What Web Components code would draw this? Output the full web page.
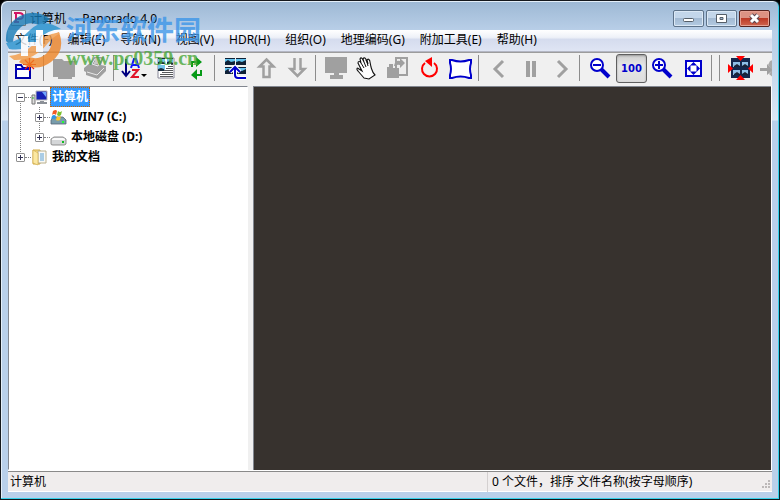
<!DOCTYPE html>
<html lang="zh-CN">
<head>
<meta charset="utf-8">
<title>计算机 - Panorado 4.0</title>
<style>
html,body{margin:0;height:100%;background:#000}
body{font:12px/16px "Noto Sans","Noto Sans CJK SC",sans-serif;color:#000;overflow:hidden}
</style>
</head>
<body>
<app-window></app-window>
<script>
function define(name, html, init) {
  customElements.define(name, class extends HTMLElement {
    constructor() {
      super();
      const root = this.attachShadow({mode: 'open'});
      root.innerHTML = html;
    }
    connectedCallback() { if (init) init.call(this, this.shadowRoot); }
  });
}

const ICONS = {
  newfolder: '<path d="M6 11h5l2 3h7v10H6z" fill="#fff" stroke="#00a" stroke-width="2"/><path d="M5 14h15v2H5z" fill="#00c"/><path d="M19.500 4v13M13 10.500h13M15 6l9 9M24 6l-9 9" stroke="#f21a08" stroke-width="1.200"/>',
  folder: '<path d="M4 5h9l2 2h11v16h-3v2H9v-2H4z" fill="#a0a0a0"/>',
  print: '<path d="M4 14l6-5 4-6h10l-3 8 5 1v5l-8 8-12-4v-3l-2-1z" fill="#a0a0a0"/><path d="M15 5h6l-3 7-6-2zM7 18l10 3 7-7" stroke="#e8e8e8" fill="none"/><path d="M15 7h4M14 9h4" stroke="#eee"/>',
  sort: '<path d="M7 5v17M3 17l4 5 4-5" stroke="#000080" stroke-width="2" fill="none"/><path d="M12 14l3-9h2l3 9M13 11h6" stroke="#11f" stroke-width="2" fill="none"/><path d="M13 16h6l-6 7h7" stroke="#e0142a" stroke-width="2" fill="none"/><path d="M22 20h6l-3 3z"/>',
  details: '<path d="M8 4h16v20H8z" fill="#fff" stroke="#889" /><path d="M8 4h7v6H8zM17 4h6v6h-6zM8 11h7v6H8z" fill="#75c6eb"/><path d="M8 4h7v1H8zM17 4h6v1h-6zM8 8l3-1 4 2v1H8zM17 8l3-1 3 2v1h-6zM8 15l3-1 3 1v2H8z" fill="#182b3b"/><path d="M21 11h2M18 13h5M16 15h7M14 17h9M12 19h11M10 21h13M10 23h13" stroke="#56585c" transform="translate(0 -.5)"/>',
  refresh: '<path d="M11 13V8h6M20 16v5h-7" stroke="#079a17" stroke-width="2" fill="none"/><path d="M15 3l6 5-6 5zM16 15l-6 6 6 5z" fill="#079a17"/>',
  browser: '<path d="M5 4h10v7H5zM16 4h10v7H16zM5 13h10v7H5zM16 13h10v7H16z" fill="#62c3ef"/><path d="M5 4h10v1H5zM16 4h10v1H16zM5 13h10v1H5zM16 13h10v1H16zM5 8l3-2 3 2 4-1v4H5zM16 8l3-1 3 1 4-2v5H16zM5 17l3-2 3 2 4-1v4H5zM16 17l3-1 3 1 4-2v5H16z" fill="#102136"/><path d="M26 24h-8q-3 0-3-3v-7M10 18l5-5 5 5" stroke="#fff" stroke-width="4" fill="none"/><path d="M26 24h-8q-3 0-3-3v-7M10 18l5-5 5 5" stroke="#00c" stroke-width="2" fill="none"/>',
  up: '<path d="M15.500 5.500l7 7h-4V23h-6V12.500h-4z" fill="#eee" stroke="#a0a0a0" stroke-width="2.500"/>',
  down: '<path d="M12.500 4v11h-4l7 7 7-7h-4V4" fill="#eee" stroke="#a0a0a0" stroke-width="2.500"/>',
  screen: '<path d="M4 3h22v16h-8v2h4v4H9v-4h4v-2H4z" fill="#a0a0a0"/>',
  hand: '<path d="M13 24L7 17c-2-2-1-4 1-2l3 2-4-8c0-2 2-2 3 0l-1-4c1-2 2-1 3 1l1 2-1-3c1-2 3-1 3 1l2 4-1-4c1-2 3 0 3 2l1 5c1 3 1 5 4 8l-6 4z" fill="#fff" stroke="#111" stroke-width="1.100" transform="translate(-1 0)"/><path d="M9 9l3 5M12 8l2 5M15 8l1 4" stroke="#111" fill="none"/>',
  copy: '<path d="M13 4h11v17H13z" fill="#eee" stroke="#a0a0a0" stroke-width="2"/><path d="M4 13h2v-3h4v4h6v10H4zM11 12q1-6 6-5V4l5 5-5 5v-3q-3-1-4 1z" fill="#a0a0a0"/>',
  rotate: '<path d="M11 9a7.500 7.500 0 1 0 9 0" fill="none" stroke="red" stroke-width="2"/><path d="M18 3v10l-7-6z" fill="red"/>',
  warp: '<path d="M5 6h2q8.500 3 17 0h2v3q-2 6 0 12v3h-2q-8.500-3-17 0H5v-3q2-6 0-12z" fill="#fff" stroke="#00c" stroke-width="2"/>',
  prev: '<path d="M19 7l-8 8 8 8" fill="none" stroke="#a0a0a0" stroke-width="3"/>',
  pause: '<path d="M11 7h4v16h-4zM17 7h4v16h-4z" fill="#a0a0a0"/>',
  next: '<path d="M12 7l8 8-8 8" fill="none" stroke="#a0a0a0" stroke-width="3"/>',
  zoomout: '<path d="M16 15l8 8" stroke="#00c" stroke-width="4"/><circle cx="12" cy="11" r="6" fill="#fff" stroke="#00c" stroke-width="2"/><path d="M8 11h8" stroke="#00c" stroke-width="2"/>',
  zoomin: '<path d="M16 15l8 8" stroke="#00c" stroke-width="4"/><circle cx="12" cy="11" r="6" fill="#fff" stroke="#00c" stroke-width="2"/><path d="M8 11h8M12 7v8" stroke="#00c" stroke-width="2"/>',
  fit: '<path d="M8 7h15v15H8z" fill="#fff" stroke="#00c" stroke-width="2"/><path d="M15.500 8l3.500 3.500h-7zM15.500 21l3.500-3.500h-7zM9 14.500l3.500-3.500v7zM22 14.500l-3.500-3.500v7z" fill="#00c"/>',
  pano: '<path d="M6 4h19v20H6z" fill="#14274d"/><path d="M8 8h7v5H8zM17 8h6v5h-6zM8 16h7v5H8zM17 16h6v5h-6z" fill="#8ebfe7"/><path d="M9 12l3-2 3 2v1H9zM17 12l3-2 3 2v1h-6zM9 20l3-2 3 2v1H9zM17 20l3-2 3 2v1h-6z" fill="#182338"/><path d="M11 2h9l-4.500 5zM11 26h9l-4.500-5zM3 10v9l5-4.500zM28 10v9l-5-4.500z" fill="#f00"/>',
  export: '<path d="M4 14h7v-4l6 6-6 5v-4H4z" fill="#a0a0a0"/><path d="M14 7l5-2 4-1v20h-5l-5-4 3-4-4-5z" fill="#aaa"/>'
};
const TREE_ICONS = {
  computer: '<path d="M1 6h3v9H1z" fill="#ddd" stroke="#777"/><path d="M2 8v2" stroke="#3b3"/><path d="M5 2h11v9H5z" fill="#1622b4" stroke="#bbb"/><path d="M11 3h4v5z" fill="#6fa6ff"/><path d="M9 12h4v1h3v2H6v-2h3z" fill="#8b9097"/>',
  win: '<path d="M1 11l3-3h9l3 3v4H1z" fill="#789cab" stroke="#567" stroke-width=".8"/><path d="M12 13h2" stroke="#2f3" stroke-width="2"/><path d="M3 2q3-2 4 0L6 6Q4 4 2 6z" fill="#f25a24"/><path d="M8 2q2 2 4 0l-1 4q-2 2-4 0z" fill="#7bc02d"/><path d="M2 7q2-2 4 0l-1 3q-2-1-4 0z" fill="#2e96e8"/><path d="M7 7q2 2 4 0l-1 4q-2 1-4 0z" fill="#ffc72b"/>',
  disk: '<path d="M1 10l3-2h9l3 2v5q-1 1-2 1H3q-2 0-2-1z" fill="#d4d6d8" stroke="#777" stroke-width=".8"/><path d="M2 10l2-1h9l2 1v1H2z" fill="#fafafa"/><path d="M12 13h2" stroke="#1b2" stroke-width="2"/>',
  docs: '<path d="M2 1h7v14H2z" fill="#f6dc87" stroke="#d0aa45"/><path d="M7 2h8v12H7z" fill="#f9f9f5" stroke="#bbb08d"/><path d="M9 5h4M9 7h4M9 9h4M9 11h4" stroke="#5ca0d4"/><path d="M2 1l5 3v12l-5-2z" fill="#fbe8a3" stroke="#d0aa45" stroke-width=".6"/>'
};

define('caption-button', `<style>
:host{display:block}
button{display:block;width:31px;height:17px;padding:0;border:1px solid #5d7289;border-radius:2px;box-shadow:inset 0 0 0 1px #dbe8f5;background:linear-gradient(#c3d6ea 50%,#a3bad3 50%,#b4cbe2)}
:host([kind=close]) button{border-color:#57231f;box-shadow:inset 0 0 0 1px #e6a294;background:linear-gradient(#dc9283 50%,#bd3a26 50%,#cf6650)}
svg{display:block;margin:auto}
</style><button><svg width="13" height="11"></svg></button>`, function (r) {
  const kind = this.getAttribute('kind');
  r.querySelector('button').setAttribute('aria-label', kind);
  r.querySelector('svg').innerHTML = {
    minimize: '<rect x="1.500" y="5.500" width="10" height="3" rx="1" fill="#fff" stroke="#555e68"/>',
    maximize: '<path d="M1.500 1.500h10v8h-10zM5 4.500v2h3v-2z" fill="#fff" fill-rule="evenodd" stroke="#555e68"/>',
    close: '<path d="M3 2l7 7M10 2l-7 7" stroke="#5a4650" stroke-width="5"/><path d="M3 2l7 7M10 2l-7 7" stroke="#fff" stroke-width="3"/>'
  }[kind];
});

define('title-bar', `<style>
:host{display:flex;height:29px;align-items:flex-start;padding:0 9px 0 10px}
svg{margin-top:9px;flex:none}
h1{flex:1;margin:9px 0 0 4px;font:inherit;line-height:18px;white-space:pre}
div{display:flex;gap:2px;margin-top:9px}
</style><svg width="15" height="16"><path d="M.5.5h14v15H.5z" fill="#f5eef2" stroke="#777"/><path d="M3 3h5q4 0 4 3t-4 3H6M5 3v9M3 12h5" fill="none" stroke="#d31563" stroke-width="2"/></svg>
<h1><slot></slot></h1>
<div><caption-button kind="minimize"></caption-button><caption-button kind="maximize"></caption-button><caption-button kind="close"></caption-button></div>`);

define('menu-item', `<style>:host{display:block}
button{font:inherit;color:inherit;border:0;background:none;padding:0 8px 0 7px;line-height:20px;white-space:nowrap}
</style><button><slot></slot></button>`);

define('menu-bar', `<style>
:host{display:flex;height:20px;padding-bottom:1px;border-bottom:1px solid #b4b7c4;background:linear-gradient(#fff,#eef1f8 35%,#d5dcee 45%,#dfe5f4)}
</style><slot></slot>`);

define('tool-button', `<style>
:host{display:block;flex:none}
button{display:block;width:31px;height:29px;border:0;padding:0;background:none;color:#00c;font:bold 10px/27px "DejaVu Sans",sans-serif}
:host([pressed]) button{border:1px solid #5f5f5f;border-radius:3px;background:linear-gradient(#cfcfcf,#e6e6e6 40%,#dedede);box-shadow:inset 0 1px 2px #999}
svg{display:block}
</style><button><slot></slot></button>`, function (r) {
  const icon = this.getAttribute('icon');
  if (icon) {
    const b = r.querySelector('button');
    b.setAttribute('aria-label', icon);
    b.innerHTML = '<svg width="31" height="29" viewBox="0 0 31 29">' + ICONS[icon] + '</svg>';
  }
});
define('tool-separator', `<style>:host{display:block;flex:none;width:1px;height:26px;margin:1px 5px 0 2px;background:#8c8c8c}</style>`);
define('tool-bar', `<style>
:host{display:flex;height:34px;padding:1px 0 0 2px;overflow:hidden;background:#f0f0f0;border-top:1px solid #9c9c9c;box-sizing:border-box}
</style><slot></slot>`);

define('tree-item', `<style>
:host{display:flex;height:20px;align-items:center;font-weight:bold;white-space:nowrap;padding-left:7px}
:host([level="2"]){padding-left:26px}
button{width:9px;height:9px;padding:0;border:1px solid #919191;border-radius:1px;background:#fff;flex:none}
button svg{display:block}
i{width:6px;border-top:1px dotted #808080;flex:none}
.pic{flex:none;margin-right:2px}
span{padding:0 1px;line-height:18px;border:1px solid transparent}
:host([selected]) span{background:#3399ff;color:#fff;border:1px dotted #cc6600}
</style><button><svg width="7" height="7"><path/></svg></button><i></i><svg class="pic" width="17" height="17"></svg><span><slot></slot></span>`, function (r) {
  r.querySelector('path').outerHTML = '<path d="M1 3h5v1H1z' + (this.hasAttribute('open') ? '' : 'M3 1h1v5H3z') + '" fill="#335"/>';
  r.querySelector('button').setAttribute('aria-label', this.hasAttribute('open') ? 'collapse' : 'expand');
  r.querySelector('.pic').innerHTML = TREE_ICONS[this.getAttribute('icon')];
});
define('folder-tree', `<style>
:host{display:block;box-sizing:border-box;background:#fff;border:1px solid #828790;border-color:#828790 #fff #fff #828790}
.nodes{display:block;background:
 repeating-linear-gradient(#808080 0 1px,transparent 1px 2px) 11px 16px/1px 50px no-repeat,
 repeating-linear-gradient(#808080 0 1px,transparent 1px 2px) 30px 20px/1px 30px no-repeat}
</style><div class="nodes"><slot></slot></div>`);

define('image-view', `<style>:host{display:block;box-sizing:border-box;background:#37322e;border:1px solid #828790;border-width:1px 0 0 1px}</style>`);

define('status-bar', `<style>
:host{display:grid;grid-template-columns:479fr 285fr;height:21px;box-sizing:border-box;background:#f0eded;border-bottom:1px solid #fff;line-height:20px}
div{padding-left:2px;white-space:nowrap}
.info{display:flex;justify-content:space-between;align-items:end;border-left:1px solid #d4d0d0;padding-left:4px}
svg{flex:none}
</style><div><slot name="path"></slot></div><div class="info"><slot name="info"></slot>
<svg width="11" height="12"><path d="M7 0h2v2H7zM4 3h2v2H4zM7 3h2v2H7zM1 6h2v2H1zM4 6h2v2H4zM7 6h2v2H7z" fill="#bcb8b8"/></svg></div>`);

define('site-watermark', `<style>
:host{display:flex;gap:4px;opacity:.8;pointer-events:none;white-space:nowrap}
svg{flex:none}
b{display:block}
.name{font:bold 27px/34px "Noto Sans CJK SC",sans-serif;color:#3d96e8}
.url{font:bold 20px/24px "Liberation Serif",serif;color:#4aa83c}
</style><svg width="57" height="57" viewBox="0 0 57 57">
<path d="M1 29Q0 12 15 4Q31-4 45 7L36 14Q25 8 16 15Q8 22 8 31Q4 33 1 29z" fill="#1679b4"/>
<path d="M1 31Q14 30 25 18Q38 5 56 17Q42 18 34 27Q22 40 4 37z" fill="#2793cf"/>
<path d="M54 20Q61 39 46 50Q31 61 14 50L20 43Q31 50 41 42Q49 34 46 23z" fill="#ee8425"/>
<path d="M4 44Q17 43 28 33Q40 21 55 21Q48 25 43 31Q29 49 9 48z" fill="#f39b46"/>
<path d="M16 24h7v6h8V18h7v22h-7V34h-8v10h-7z" fill="#fff"/></svg>
<div><b class="name">河东软件园</b><b class="url">www.pc0359.cn</b></div>`);

define('app-window', `<style>
:host{display:flex;flex-direction:column;position:relative;height:100vh;box-sizing:border-box;border:1px solid #15181c;border-right-color:#08272f;border-radius:7px 7px 0 0;overflow:hidden;
 background:linear-gradient(#9db8d4,#b9cfe8 30px,#bdd2e9 50px,#dce8f5 119px,#b9d0ea 120px);box-shadow:inset -1px -1px #35d1ea,inset 1px 1px #e4eff9}
main{flex:1;min-height:0;margin:0 7px 7px;display:flex;flex-direction:column;background:#f0f0f0}
.split{flex:1;min-height:0;display:grid;grid-template-columns:240px 1fr;gap:5px;border:solid #fff;border-width:0 1px 1px 0}
status-bar{border-top:1px solid #8a8a8a}
site-watermark{position:absolute;left:4px;top:11px}
</style>
<title-bar>计算机&nbsp;&nbsp; - Panorado 4.0</title-bar>
<main>
<menu-bar><menu-item>文件(F)</menu-item><menu-item>编辑(E)</menu-item><menu-item>导航(N)</menu-item><menu-item>视图(V)</menu-item><menu-item>HDR(H)</menu-item><menu-item>组织(O)</menu-item><menu-item>地理编码(G)</menu-item><menu-item>附加工具(E)</menu-item><menu-item>帮助(H)</menu-item></menu-bar>
<tool-bar>
<tool-button icon="newfolder"></tool-button><tool-separator></tool-separator>
<tool-button icon="folder"></tool-button><tool-button icon="print"></tool-button><tool-separator></tool-separator>
<tool-button icon="sort"></tool-button><tool-button icon="details"></tool-button><tool-button icon="refresh"></tool-button><tool-separator></tool-separator>
<tool-button icon="browser"></tool-button><tool-button icon="up"></tool-button><tool-button icon="down"></tool-button><tool-separator></tool-separator>
<tool-button icon="screen"></tool-button><tool-button icon="hand"></tool-button><tool-button icon="copy"></tool-button><tool-button icon="rotate"></tool-button><tool-button icon="warp"></tool-button><tool-separator></tool-separator>
<tool-button icon="prev"></tool-button><tool-button icon="pause"></tool-button><tool-button icon="next"></tool-button><tool-separator></tool-separator>
<tool-button icon="zoomout"></tool-button><tool-button pressed>100</tool-button><tool-button icon="zoomin"></tool-button><tool-button icon="fit"></tool-button><tool-separator></tool-separator><tool-separator></tool-separator>
<tool-button icon="pano"></tool-button><tool-button icon="export"></tool-button>
</tool-bar>
<div class="split">
<folder-tree><tree-item icon="computer" open selected>计算机</tree-item><tree-item level="2" icon="win">WIN7 (C:)</tree-item><tree-item level="2" icon="disk">本地磁盘 (D:)</tree-item><tree-item icon="docs">我的文档</tree-item></folder-tree>
<image-view></image-view>
</div>
<status-bar><span slot="path">计算机</span><span slot="info">0 个文件，排序 文件名称(按字母顺序)</span></status-bar>
</main>
<site-watermark></site-watermark>`);
</script>
</body>
</html>
